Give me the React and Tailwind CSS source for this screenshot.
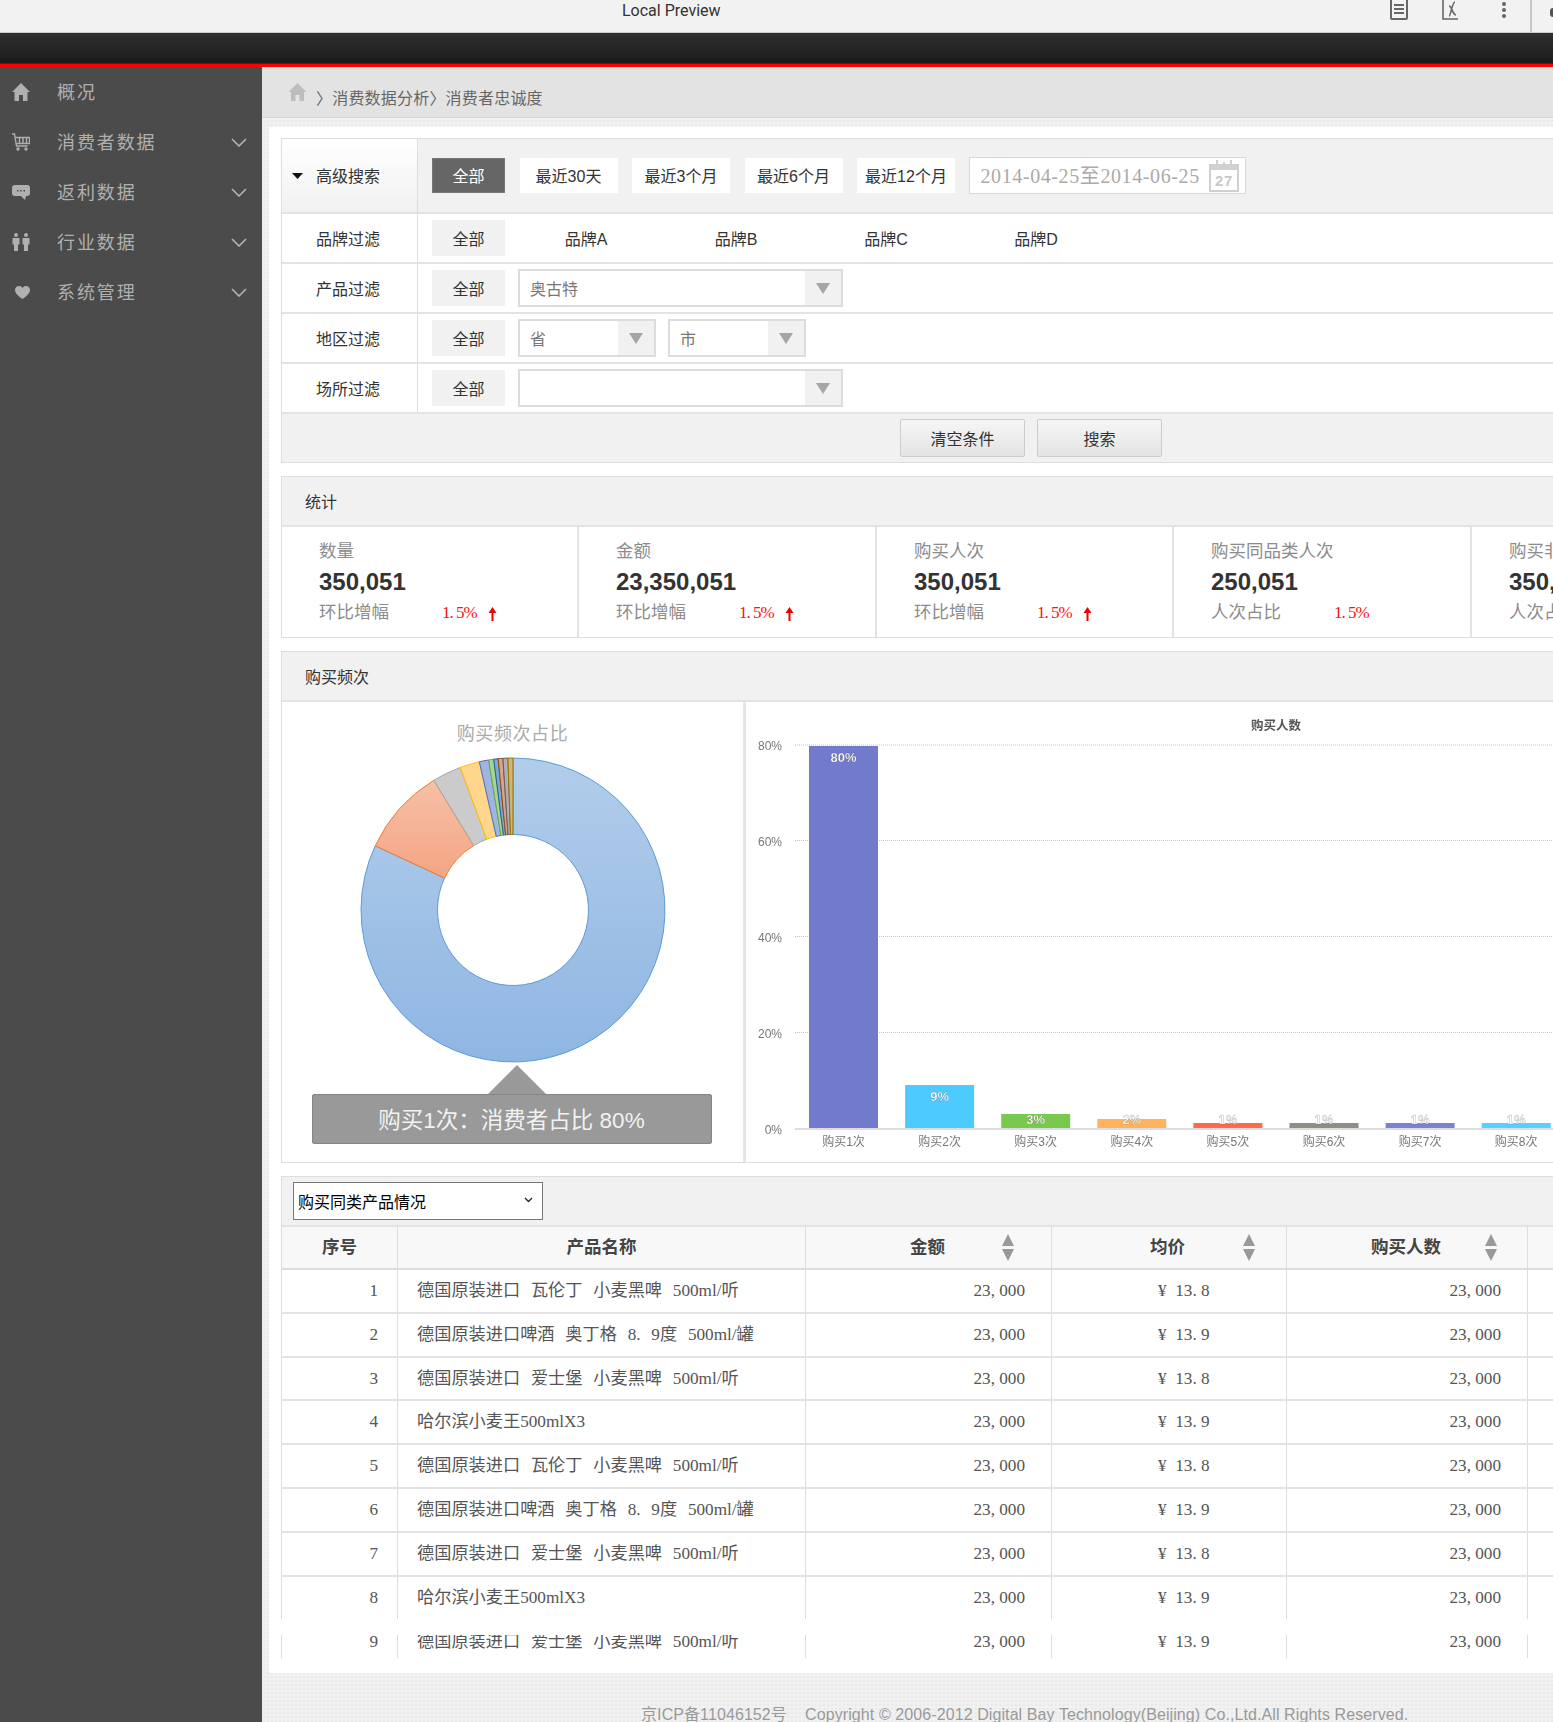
import React from 'react'

const menu = [
  { name: '概况', icon: 'home' },
  { name: '消费者数据', icon: 'cart', arrow: true },
  { name: '返利数据', icon: 'chat', arrow: true },
  { name: '行业数据', icon: 'people', arrow: true },
  { name: '系统管理', icon: 'heart', arrow: true },
]

const stats = [
  { title: '数量', value: '350,051', sub: '环比增幅', up: true },
  { title: '金额', value: '23,350,051', sub: '环比增幅', up: true },
  { title: '购买人次', value: '350,051', sub: '环比增幅', up: true },
  { title: '购买同品类人次', value: '250,051', sub: '人次占比' },
  { title: '购买非同品类人次', value: '350,051', sub: '人次占比' },
]

const slices = [
  { to: 295, fill: 'url(#blueFill)', stroke: '#5b9bd5' },
  { to: 328.6, fill: 'url(#orangeFill)', stroke: '#ed7d31' },
  { to: 339.7, fill: '#cbcbcb', stroke: '#a5a5a5' },
  { to: 347.2, fill: '#ffd68c', stroke: '#ffc000' },
  { to: 350.8, fill: '#a0b4e0', stroke: '#4472c4' },
  { to: 352.7, fill: '#a8d590', stroke: '#70ad47' },
  { to: 354.4, fill: '#7fa8d4', stroke: '#255e91' },
  { to: 356.2, fill: '#d4a594', stroke: '#9e480e' },
  { to: 358.1, fill: '#b0b0b0', stroke: '#636363' },
  { to: 360, fill: '#cbb67c', stroke: '#997300' },
]

const bars = [
  { label: '购买1次', pct: '80%', top: 44, color: '#727acb' },
  { label: '购买2次', pct: '9%', top: 383, color: '#4dcbff' },
  { label: '购买3次', pct: '3%', top: 412, color: '#79c94f' },
  { label: '购买4次', pct: '2%', top: 417, color: '#ffb35c' },
  { label: '购买5次', pct: '1%', top: 421, color: '#ff6b4a' },
  { label: '购买6次', pct: '1%', top: 421, color: '#8e8e86' },
  { label: '购买7次', pct: '1%', top: 421, color: '#7b83cf' },
  { label: '购买8次', pct: '1%', top: 421, color: '#55d0ff' },
]

const rows = [
  ['1', '德国原装进口 瓦伦丁 小麦黑啤 500ml/听', '¥\u00a0\u00a013. 8'],
  ['2', '德国原装进口啤酒 奥丁格 8. 9度 500ml/罐', '¥\u00a0\u00a013. 9'],
  ['3', '德国原装进口 爱士堡 小麦黑啤 500ml/听', '¥\u00a0\u00a013. 8'],
  ['4', '哈尔滨小麦王500mlX3', '¥\u00a0\u00a013. 9'],
  ['5', '德国原装进口 瓦伦丁 小麦黑啤 500ml/听', '¥\u00a0\u00a013. 8'],
  ['6', '德国原装进口啤酒 奥丁格 8. 9度 500ml/罐', '¥\u00a0\u00a013. 9'],
  ['7', '德国原装进口 爱士堡 小麦黑啤 500ml/听', '¥\u00a0\u00a013. 8'],
  ['8', '哈尔滨小麦王500mlX3', '¥\u00a0\u00a013. 9'],
]

const MenuIcon = ({ type }) => {
  if (type === 'home') {
    return (
      <svg width="18" height="18" viewBox="0 0 18 18" fill="#b0b0b0">
        <path d="M9 0l9 9h-2.500v9h-4.500v-6h-4v6h-4.500v-9h-2.500z" />
      </svg>
    )
  }
  if (type === 'cart') {
    return (
      <svg width="18" height="18" viewBox="0 0 18 18" fill="none" stroke="#b0b0b0" strokeWidth="1.4">
        <path d="M0 1h2.500l2 12h11" />
        <path d="M3.500 4.500h14v6h-13M7.500 4.500v6M11 4.500v6M14.500 4.500v6" />
        <circle cx="6" cy="16" r="1" fill="#b0b0b0" />
        <circle cx="14" cy="16" r="1" fill="#b0b0b0" />
      </svg>
    )
  }
  if (type === 'chat') {
    return (
      <svg width="18" height="15" viewBox="0 0 18 15">
        <path d="M3 0h12a3 3 0 0 1 3 3v5a3 3 0 0 1-3 3h-1l-1 4-4-4h-6a3 3 0 0 1-3-3v-5a3 3 0 0 1 3-3z" fill="#b0b0b0" />
        <path d="M5 5h1.500v1.500h-1.500zM8.200 5h1.500v1.500h-1.500zM11.500 5h1.500v1.500h-1.500z" fill="#4b4b4b" />
      </svg>
    )
  }
  if (type === 'people') {
    return (
      <svg width="18" height="18" viewBox="0 0 18 18" fill="#b0b0b0">
        <circle cx="4" cy="2" r="2" />
        <circle cx="14" cy="2" r="2" />
        <path d="M0.500 5h7v6.500h-1.500v6.500h-4v-6.500h-1.500zM10.500 5h7v6.500h-1.500v6.500h-4v-6.500h-1.500z" />
      </svg>
    )
  }
  return (
    <svg width="15" height="13" viewBox="0 0 15 13" fill="#b0b0b0" className="ml-[2px]">
      <path d="M7.500 2c-1-1.500-2-2-3.500-2-2 0-4 1.500-4 4 0 3 3.500 6.500 7.500 9 4-2.500 7.500-6 7.500-9 0-2.500-2-4-4-4-1.500 0-2.500 0.500-3.500 2z" />
    </svg>
  )
}

const SortIcon = ({ className }) => (
  <svg width="12" height="27" viewBox="0 0 12 27" fill="#999" className={className}>
    <path d="M6 0l6 12h-12zM0 15h12l-6 12z" />
  </svg>
)

const FakeSelect = ({ text, className }) => (
  <div className={`h-[38px] flex border-2 border-[#dcdcdc] bg-white ${className}`}>
    <span className="flex-1 pl-[10px] pt-[2px] leading-[34px] text-[16px] text-[#777]">{text}</span>
    <span className="w-[36px] bg-[#f1f1f1] flex items-center justify-center">
      <svg width="14" height="11" viewBox="0 0 14 11" fill="#a5a5a5">
        <path d="M0 0h14l-7 11z" />
      </svg>
    </span>
  </div>
)

const FilterRow = ({ label, children }) => (
  <div className="flex h-[50px] border-b-2 border-[#e3e3e3]">
    <div className="w-[136px] pt-[4px] pr-[3px] border-r border-[#ddd] flex items-center justify-center text-[16px] text-[#333]">{label}</div>
    <div className="flex items-center pl-[14px]">
      <span className="w-[73px] h-[36px] pt-[4px] bg-[#f1f1f1] flex items-center justify-center text-[16px] text-[#333]">全部</span>
      {children}
    </div>
  </div>
)

const Donut = () => {
  const cx = 155
  const cy = 155
  const outer = 152
  const inner = 75.5
  const point = (r, deg) => {
    const a = (deg * Math.PI) / 180
    return `${(cx + r * Math.sin(a)).toFixed(2)} ${(cy - r * Math.cos(a)).toFixed(2)}`
  }
  let from = 0
  return (
    <svg width="310" height="310" viewBox="0 0 310 310" className="blur-[0.3px]">
      <defs>
        <linearGradient id="blueFill" gradientUnits="userSpaceOnUse" x1="0" y1="3" x2="0" y2="307">
          <stop offset="0" stopColor="#b2cdea" />
          <stop offset="1" stopColor="#8fb6e3" />
        </linearGradient>
        <linearGradient id="orangeFill" x1="0" y1="0" x2="0" y2="1">
          <stop offset="0" stopColor="#f6c0a8" />
          <stop offset="1" stopColor="#f4a583" />
        </linearGradient>
      </defs>
      {slices.map((s, i) => {
        const large = s.to - from > 180 ? 1 : 0
        const d = `M${point(outer, from)}A${outer} ${outer} 0 ${large} 1 ${point(outer, s.to)}L${point(inner, s.to)}A${inner} ${inner} 0 ${large} 0 ${point(inner, from)}Z`
        from = s.to
        return <path key={i} d={d} fill={s.fill} stroke={s.stroke} strokeWidth="1" />
      })}
    </svg>
  )
}

const BarChart = () => (
  <svg width="808" height="460" viewBox="0 0 808 460" className="-ml-[1px] shrink-0 blur-[0.3px]" fontFamily="'Liberation Sans','Noto Sans CJK SC',sans-serif">
    <text x="531" y="28" textAnchor="middle" fontSize="12.500" fontWeight="700" fill="#555">购买人数</text>
    {[
      ['80%', 43],
      ['60%', 138.5],
      ['40%', 234.5],
      ['20%', 330.5],
    ].map(([t, y]) => (
      <g key={t}>
        <line x1="50" x2="808" y1={y} y2={y} stroke="#c4c4c4" strokeDasharray="1 1" />
        <text x="37" y={y + 5} textAnchor="end" fontSize="12" fill="#777">{t}</text>
      </g>
    ))}
    <text x="37" y="432" textAnchor="end" fontSize="12" fill="#777">0%</text>
    <line x1="50" x2="808" y1="427" y2="427" stroke="#ddd" strokeWidth="2" />
    {bars.map((b, i) => {
      const x = 64 + i * 96.1
      const tall = b.top < 400
      return (
        <g key={b.label}>
          <rect x={x} y={b.top} width="69" height={426 - b.top} fill={b.color} />
          <text x={x + 34.5} y={tall ? b.top + 16 : 422} textAnchor="middle" fontSize="13" fontWeight="700" fill="#fff" stroke="#00000055" strokeWidth="0.4">{b.pct}</text>
          <text x={x + 34.5} y="444" textAnchor="middle" fontSize="12" fill="#777">{b.label}</text>
        </g>
      )
    })}
  </svg>
)

const Calendar = () => (
  <svg width="30" height="32" viewBox="0 0 30 32" className="shrink-0" fontFamily="'Liberation Sans',sans-serif">
    <rect x="1" y="5" width="28" height="26" fill="#fff" stroke="#d0d0d0" strokeWidth="2" />
    <rect x="1" y="5" width="28" height="5" fill="#d0d0d0" />
    <path d="M8 0v8M15 2v6M22 0v8" stroke="#d0d0d0" strokeWidth="2" />
    <text x="15" y="26" textAnchor="middle" fontSize="15" fontWeight="700" fill="#c8c8c8">27</text>
  </svg>
)

const Row = ({ cells, height, top }) => {
  const align = top ? 'items-start leading-[14px]' : 'items-center'
  return (
    <div className={`grid grid-cols-[116px_408px_246px_235px_241px_1fr] border-l border-[#ddd] text-[17.2px] text-[#555] [font-family:Liberation_Serif,Noto_Sans_CJK_SC,serif] ${height}`}>
      <div className={`border-r border-[#ddd] overflow-hidden flex justify-end pr-[19px] ${align}`}>{cells[0]}</div>
      <div className={`border-r border-[#ddd] overflow-hidden flex pl-[19px] [word-spacing:6.5px] ${align}`}>{cells[1]}</div>
      <div className={`border-r border-[#ddd] overflow-hidden flex justify-end pr-[26px] ${align}`}>23, 000</div>
      <div className={`border-r border-[#ddd] overflow-hidden flex pl-[106px] ${align}`}>{cells[2]}</div>
      <div className={`border-r border-[#ddd] overflow-hidden flex justify-end pr-[26px] ${align}`}>23, 000</div>
      <div />
    </div>
  )
}

const PanelHead = ({ children }) => (
  <div className="h-[51px] pt-[4px] border-t border-b-2 border-l border-t-[#ddd] border-b-[#e3e3e3] border-l-[#ddd] bg-[#f1f1f1] flex items-center pl-[23px] text-[16px] text-[#333]">
    {children}
  </div>
)

export default function App() {
  return (
    <div className="w-full h-[1722px] overflow-hidden bg-white [font-family:Liberation_Sans,Noto_Sans_CJK_SC,sans-serif]">
      <div className="h-[33px] bg-[#f2f2f2] border-b border-[#ccc] flex items-start pl-[622px]">
        <span className="w-[768px] shrink-0 pt-[1px] leading-[20px] text-[16px] text-[#333] [font-family:Roboto,Noto_Sans,sans-serif]">Local Preview</span>
        <svg width="18" height="20" viewBox="0 0 18 20" fill="none" stroke="#666" strokeWidth="2" className="shrink-0">
          <path d="M1 0v18a1 1 0 0 0 1 1h14a1 1 0 0 0 1-1v-18M4 5h10M4 9h10M4 13h10" />
        </svg>
        <svg width="18" height="20" viewBox="0 0 18 20" fill="none" stroke="#666" strokeWidth="2" className="ml-[34px] shrink-0">
          <path d="M1 0v19h15M7 16c2 0 3-14 6-14M7 6c3 0 3 8 7 9" strokeWidth="1.6" />
        </svg>
        <svg width="6" height="18" viewBox="0 0 6 18" fill="#666" className="ml-[41px] mt-[1px] shrink-0">
          <circle cx="3" cy="3" r="2" />
          <circle cx="3" cy="9" r="2" />
          <circle cx="3" cy="15" r="2" />
        </svg>
        <span className="ml-[23px] w-[2px] h-[32px] shrink-0 bg-[#c8c8c8]" />
        <span className="ml-[18px] mt-[8px] w-[3px] h-[9px] shrink-0 rounded-l-full bg-[#555]" />
      </div>
      <div className="h-[30px] bg-gradient-to-b from-[#303030] to-[#1b1b1b]" />
      <div className="h-[4px] border-t border-[#a00000] bg-[#ff0000]" />

      <div className="flex h-[1655px]">
        <aside className="w-[262px] shrink-0 bg-[#4b4b4b]">
          {menu.map((m) => (
            <div key={m.name} className="h-[50px] flex items-center pl-[12px]">
              <span className="w-[18px] flex justify-center"><MenuIcon type={m.icon} /></span>
              <span className="ml-[27px] mt-[3px] text-[18px] tracking-[1.9px] text-[#b0b0b0]">{m.name}</span>
              {m.arrow && (
                <svg width="16" height="9" viewBox="0 0 16 9" fill="none" stroke="#b4b4b4" strokeWidth="1.6" className="ml-auto mr-[15px]">
                  <path d="M1 1l7 7 7-7" />
                </svg>
              )}
            </div>
          ))}
        </aside>

        <main className="flex-1 min-w-0 bg-[#f1f1f1] bg-[radial-gradient(#e9e9e9_1px,transparent_1px)] bg-[length:4px_4px]">
          <div className="h-[51px] bg-[#e3e3e3] border-b border-[#d6d6d6] flex items-center pl-[26px]">
            <svg width="19" height="18" viewBox="0 0 18 18" fill="#bdbdbd" className="-mt-[1px]">
              <path d="M9 0l9 9h-2.500v9h-4.500v-6h-4v6h-4.500v-9h-2.500z" />
            </svg>
            <span className="ml-[9px] mt-[13px] text-[16px] tracking-[0.2px] text-[#666]">〉消费数据分析〉消费者忠诚度</span>
          </div>

          <div className="mt-[9px] ml-[7px] bg-white pt-[11px] pl-[12px] pb-[15px] overflow-hidden">
            <section className="w-[1400px] border-t border-l border-[#ddd]">
              <div className="flex h-[75px] border-b-2 border-[#e3e3e3] bg-[#f1f1f1]">
                <div className="w-[136px] border-r border-[#ddd] bg-gradient-to-b from-white to-[#f1f1f1] flex items-center pl-[10px] text-[16px] text-[#333]">
                  <svg width="11" height="6" viewBox="0 0 11 6" fill="#111">
                    <path d="M0 0h11l-5.500 6z" />
                  </svg>
                  <span className="ml-[13px] mt-[2px]">高级搜索</span>
                </div>
                <div className="flex items-center pl-[14px] gap-[14.5px] text-[16px] text-[#333]">
                  <span className="w-[73px] h-[35px] pt-[2px] bg-[#666] border border-[#777] text-white flex items-center justify-center">全部</span>
                  <span className="w-[98px] h-[35px] pt-[2px] bg-white flex items-center justify-center">最近30天</span>
                  <span className="w-[98px] h-[35px] pt-[2px] bg-white flex items-center justify-center">最近3个月</span>
                  <span className="w-[98px] h-[35px] pt-[2px] bg-white flex items-center justify-center">最近6个月</span>
                  <span className="w-[98px] h-[35px] pt-[2px] bg-white flex items-center justify-center">最近12个月</span>
                  <div className="w-[277px] h-[37px] -ml-[1px] bg-white border border-[#d8d8d8] flex items-center pl-[11px] text-[20px] text-[#aaa] tracking-[0.6px] [font-family:Liberation_Serif,Noto_Sans_CJK_SC,serif]">
                    <span className="w-[228px] whitespace-nowrap">2014-04-25至2014-06-25</span>
                    <Calendar />
                  </div>
                </div>
              </div>

              <FilterRow label="品牌过滤">
                <div className="ml-[6px] pt-[4px] flex text-[16px] text-[#333]">
                  {['品牌A', '品牌B', '品牌C', '品牌D'].map((b) => (
                    <span key={b} className="w-[150px] text-center">{b}</span>
                  ))}
                </div>
              </FilterRow>
              <FilterRow label="产品过滤">
                <FakeSelect text="奥古特" className="ml-[13px] w-[325px]" />
              </FilterRow>
              <FilterRow label="地区过滤">
                <FakeSelect text="省" className="ml-[13px] w-[138px]" />
                <FakeSelect text="市" className="ml-[12px] w-[138px]" />
              </FilterRow>
              <FilterRow label="场所过滤">
                <FakeSelect text="" className="ml-[13px] w-[325px]" />
              </FilterRow>

              <div className="h-[49px] border-b border-[#ddd] bg-[#f1f1f1] flex items-center pl-[618px] gap-[12px] text-[16px] text-[#333]">
                <button className="w-[125px] h-[38px] pt-[4px] rounded-[2px] border border-[#ccc] bg-gradient-to-b from-[#f6f6f6] to-[#e4e4e4]">清空条件</button>
                <button className="w-[125px] h-[38px] pt-[4px] rounded-[2px] border border-[#ccc] bg-gradient-to-b from-[#f6f6f6] to-[#e4e4e4]">搜索</button>
              </div>
            </section>

            <section className="w-[1400px] mt-[13px]">
              <PanelHead>统计</PanelHead>
              <div className="grid grid-cols-[297px_298px_297px_298px_1fr] h-[111px] border-l border-b border-[#ddd]">
                {stats.map((s) => (
                  <div key={s.title} className="pl-[37px] pt-[8px] border-r-2 border-[#e3e3e3] whitespace-nowrap">
                    <div className="leading-[32px] text-[17.5px] text-[#8c8c8c]">{s.title}</div>
                    <div className="leading-[30px] text-[24px] font-bold text-[#333]">{s.value}</div>
                    <div className="leading-[31px] flex items-center text-[17.5px] text-[#8c8c8c]">
                      <span className="w-[123px]">{s.sub}</span>
                      <span className="text-[17px] text-[#ff1111] tracking-[-1px] [font-family:Liberation_Serif,serif]">1. 5%</span>
                      {s.up && (
                        <svg width="9" height="14" viewBox="0 0 9 14" fill="#ee0000" className="ml-[11px] mt-[2px]">
                          <path d="M4.500 0l4 6h-3v8h-2v-8h-3z" />
                        </svg>
                      )}
                    </div>
                  </div>
                ))}
              </div>
            </section>

            <section className="w-[1400px] mt-[13px]">
              <PanelHead>购买频次</PanelHead>
              <div className="flex h-[461px] border-l border-b border-[#ddd]">
                <div className="w-[464px] shrink-0 border-r-[3px] border-[#e6e6e6] flex flex-col items-center">
                  <div className="h-[53px] pt-[16px] leading-[32px] text-[18px] tracking-[0.6px] text-[#aaa]">购买频次占比</div>
                  <Donut />
                  <div className="ml-[8px] w-0 h-0 border-l-[29px] border-r-[29px] border-b-[29px] border-l-transparent border-r-transparent border-b-[#999]" />
                  <div className="w-[400px] h-[50px] pt-[4px] mr-[2px] rounded-[2px] bg-[#999] border border-[#858585] flex items-center justify-center text-[22.5px] text-[#f2f2f2]">
                    购买1次：消费者占比 80%
                  </div>
                </div>
                <BarChart />
              </div>
            </section>

            <section className="w-[1400px] mt-[13px]">
              <div className="h-[51px] border-t border-b-2 border-l border-t-[#ddd] border-b-[#e3e3e3] border-l-[#ddd] bg-[#f1f1f1] flex items-center pl-[11px]">
                <div className="relative w-[250px] h-[38px]">
                  <select defaultValue="same" className="appearance-none w-full h-full pl-[4px] pt-[4px] bg-white border border-[#767676] text-[16px] text-black">
                    <option value="same">购买同类产品情况</option>
                  </select>
                  <svg width="9" height="6" viewBox="0 0 9 6" fill="none" stroke="#222" strokeWidth="1.3" className="absolute right-[10px] top-[15px]">
                    <path d="M1 1l3.500 3.500 3.500-3.500" />
                  </svg>
                </div>
              </div>
              <div className="grid grid-cols-[116px_408px_246px_235px_241px_1fr] h-[43px] border-l border-b-2 border-[#ddd] bg-[#f8f8f8] text-[17.5px] font-bold text-[#444]">
                <div className="border-r border-[#ddd] flex items-center justify-center">序号</div>
                <div className="border-r border-[#ddd] flex items-center justify-center">产品名称</div>
                <div className="border-r border-[#ddd] flex items-center pl-[104px]">金额<SortIcon className="ml-auto mr-[37px]" /></div>
                <div className="border-r border-[#ddd] flex items-center pl-[98px]">均价<SortIcon className="ml-auto mr-[31px]" /></div>
                <div className="border-r border-[#ddd] flex items-center pl-[84px]">购买人数<SortIcon className="ml-auto mr-[30px]" /></div>
                <div />
              </div>
              {rows.map((r) => (
                <div key={r[0]} className={r[0] === '8' ? '' : 'border-b-2 border-[#e3e3e3]'}>
                  <Row cells={r} height={r[0] === '8' ? 'h-[42px]' : 'h-[41.8px]'} />
                </div>
              ))}
              <div className="h-[16px]" />
              <Row cells={['9', '德国原装进口 爱士堡 小麦黑啤 500ml/听', '¥\u00a0\u00a013. 9']} height="h-[23px]" top />
            </section>
          </div>

          <div className="pl-[379px] pt-[30px] leading-[24px] text-[16px] tracking-[0.09px] text-[#999] whitespace-nowrap">
            京ICP备11046152号&nbsp;&nbsp;&nbsp; Copyright © 2006-2012 Digital Bay Technology(Beijing) Co.,Ltd.All Rights Reserved.
          </div>
        </main>
      </div>
    </div>
  )
}
